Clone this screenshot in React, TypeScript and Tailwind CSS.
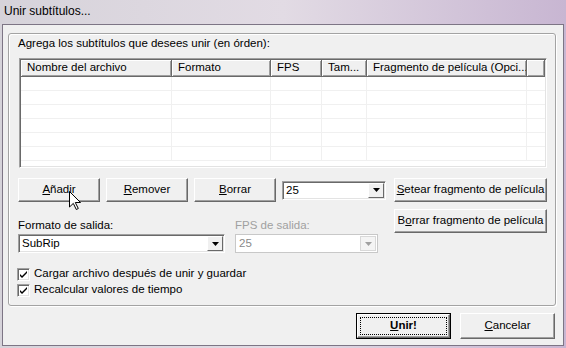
import React from "react";

const font = { fontFamily: '"Liberation Sans", Arial, sans-serif' };

function Btn({
  w,
  h = 24,
  children,
  def = false,
}: {
  w: number;
  h?: number;
  children: React.ReactNode;
  def?: boolean;
}) {
  if (def) {
    return (
      <div
        className="border border-black bg-[#f0f0f0] flex"
        style={{ width: w, height: h }}
      >
        <div className="flex-1 border border-t-white border-l-white border-r-[#696969] border-b-[#696969] shadow-[inset_-1px_-1px_0_#a0a0a0] p-[2px] flex">
          <div className="flex-1 border border-dotted border-black flex items-center justify-center font-bold text-[11.5px] text-black whitespace-nowrap">
            {children}
          </div>
        </div>
      </div>
    );
  }
  return (
    <div
      className="bg-[#f0f0f0] border border-t-white border-l-white border-r-[#696969] border-b-[#696969] shadow-[inset_-1px_-1px_0_#a0a0a0] flex items-center justify-center text-[11.5px] text-black whitespace-nowrap"
      style={{ width: w, height: h }}
    >
      {children}
    </div>
  );
}

function Combo({
  w,
  value,
  disabled = false,
}: {
  w: number;
  value: string;
  disabled?: boolean;
}) {
  return (
    <div
      className={`h-[19px] flex border ${
        disabled
          ? "border-[#c8c8c8] bg-white"
          : "border-t-[#a0a0a0] border-l-[#a0a0a0] border-r-white border-b-white shadow-[inset_1px_1px_0_#696969,inset_-1px_-1px_0_#e3e3e3] bg-white"
      }`}
      style={{ width: w }}
    >
      <div
        className={`flex-1 pl-[3px] text-[11.5px] leading-[17px] ${
          disabled ? "text-[#8a8a8a]" : "text-black"
        }`}
      >
        {value}
      </div>
      <div
        className={`w-[16px] m-[1px] flex items-center justify-center border ${
          disabled
            ? "border-[#d8d8d8] bg-[#f4f4f4]"
            : "bg-[#f0f0f0] border-t-white border-l-white border-r-[#696969] border-b-[#696969]"
        }`}
      >
        <svg width="7" height="4" viewBox="0 0 7 4">
          <path d="M0 0h7L3.5 4z" fill={disabled ? "#a0a0a0" : "#000"} />
        </svg>
      </div>
    </div>
  );
}

function Check({ label }: { label: string }) {
  return (
    <div className="h-[16px] flex items-center gap-[4px] text-[11.5px] text-black">
      <div className="w-[13px] h-[13px] bg-white border border-t-[#a0a0a0] border-l-[#a0a0a0] border-r-white border-b-white shadow-[inset_1px_1px_0_#696969,inset_-1px_-1px_0_#e3e3e3] flex items-center justify-center">
        <svg width="7" height="7" viewBox="0 0 7 7">
          <path d="M0 3l2 2 5-5v2L2 7 0 5z" fill="#000" />
        </svg>
      </div>
      <span>{label}</span>
    </div>
  );
}

const cols = [
  { w: 151, t: "Nombre del archivo" },
  { w: 99, t: "Formato" },
  { w: 51, t: "FPS" },
  { w: 45, t: "Tam..." },
  { w: 160, t: "Fragmento de película (Opci..." },
];

function ListView() {
  return (
    <div className="ml-[10px] w-[528px] h-[110px] border border-t-[#a0a0a0] border-l-[#a0a0a0] border-r-white border-b-white shadow-[inset_1px_1px_0_#696969,inset_-1px_-1px_0_#e3e3e3] bg-white p-[1px] flex flex-col overflow-hidden">
      <div className="flex h-[17px] bg-[#f0f0f0]">
        {cols.map((c) => (
          <div
            key={c.t}
            className="h-full border-r border-b border-r-[#696969] border-b-[#696969] shadow-[inset_1px_1px_0_#fff,inset_-1px_-1px_0_#a0a0a0] pl-[6px] text-[11.5px] leading-[15px] text-black whitespace-nowrap overflow-hidden"
            style={{ width: c.w }}
          >
            {c.t}
          </div>
        ))}
        <div className="flex-1 h-full border-r border-b border-r-[#696969] border-b-[#696969] shadow-[inset_1px_1px_0_#fff,inset_-1px_-1px_0_#a0a0a0]" />
      </div>
      {[0, 1, 2, 3, 4, 5].map((r) => (
        <div key={r} className="flex h-[14px] border-b border-[#f0f0f0]">
          {cols.map((c) => (
            <div
              key={c.t}
              className="h-full border-r border-[#f0f0f0]"
              style={{ width: c.w }}
            />
          ))}
        </div>
      ))}
    </div>
  );
}

export default function App() {
  return (
    <div
      className="w-[566px] h-[348px] flex flex-col bg-gradient-to-r from-[#d6d3da] via-[#e2dbe4] to-[#c8b6d2] overflow-hidden"
      style={font}
    >
      <div className="h-[24px] pl-[4px] pt-[3px] text-[12px] leading-[16px] text-black">
        Unir subtítulos...
      </div>
      <div className="mx-[2px] mb-[2px] h-[322px] border border-[#7d7585] bg-[#f0f0f0] flex flex-col relative">
        <div className="ml-[5px] mt-[8px] w-[548px] h-[273px] border border-[#a3a3a3] rounded-[3px] shadow-[inset_1px_1px_0_#fff,1px_1px_0_#fff] flex flex-col">
          <div className="pl-[9px] pt-[1px] h-[17px] text-[11.5px] leading-[16px] text-black">
            Agrega los subtítulos que desees unir (en órden):
          </div>
          <div className="mt-[7px]">
            <ListView />
          </div>
          <div className="mt-[10px] ml-[9px] flex items-center">
            <Btn w={82}>
              <span>
                <u>A</u>ñadir
              </span>
            </Btn>
            <div className="ml-[6px]">
              <Btn w={82}>
                <span>
                  <u>R</u>emover
                </span>
              </Btn>
            </div>
            <div className="ml-[6px]">
              <Btn w={82}>
                <span>
                  <u>B</u>orrar
                </span>
              </Btn>
            </div>
            <div className="ml-[6px]">
              <Combo w={104} value="25" />
            </div>
            <div className="ml-[8px]">
              <Btn w={153}>
                <span>
                  <u>S</u>etear fragmento de película
                </span>
              </Btn>
            </div>
          </div>
          <div className="mt-[7px] ml-[9px] flex items-start">
            <div className="w-[217px] flex flex-col">
              <div className="h-[17px] pt-[8px] box-content text-[11.5px] leading-[16px] text-black">
                Formato de salida:
              </div>
              <Combo w={207} value="SubRip" />
            </div>
            <div className="w-[159px] flex flex-col">
              <div className="h-[17px] pt-[8px] box-content text-[11.5px] leading-[16px] text-[#a0a0a0]">
                FPS de salida:
              </div>
              <Combo w={143} value="25" disabled />
            </div>
            <Btn w={153}>
              <span>
                B<u>o</u>rrar fragmento de película
              </span>
            </Btn>
          </div>
          <div className="mt-[13px] ml-[8px] flex flex-col">
            <Check label="Cargar archivo después de unir y guardar" />
            <Check label="Recalcular valores de tiempo" />
          </div>
        </div>
        <div className="mt-[7px] flex justify-end gap-[9px] pr-[8px]">
          <Btn w={95} h={26} def>
            <span>
              <u>U</u>nir!
            </span>
          </Btn>
          <Btn w={95} h={26}>
            <span>
              <u>C</u>ancelar
            </span>
          </Btn>
        </div>
        <svg
          className="absolute left-[66px] top-[166px]"
          width="12"
          height="19"
          viewBox="0 0 12 19"
        >
          <path
            d="M0.5 0.5v15.5l3.8-3.6 3 6.1 2-1-3-6h5.2z"
            fill="#fff"
            stroke="#000"
            strokeWidth="1"
          />
        </svg>
      </div>
    </div>
  );
}
